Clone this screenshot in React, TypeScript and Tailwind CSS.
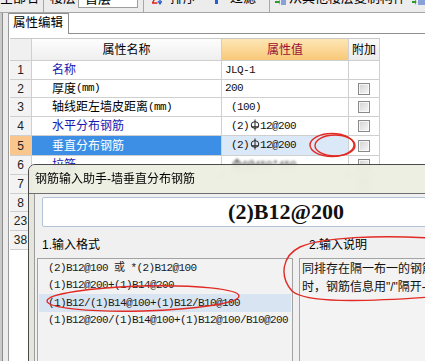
import React from "react";

const SANS = "font-['Liberation_Sans','Noto_Sans_CJK_SC',sans-serif]";
const MONO = "font-['Liberation_Mono','Noto_Sans_CJK_SC',monospace] text-[11px] tracking-[-0.6px]";

const Rebar = () => (
  <svg width="10" height="12" viewBox="0 0 10 12" className="inline-block align-[-2px] mx-[0.5px]" fill="none" stroke="#222" strokeWidth="1">
    <line x1="5" y1="0.5" x2="5" y2="11.5" />
    <ellipse cx="5" cy="6" rx="3.8" ry="3.3" />
    <line x1="1.2" y1="7.8" x2="8.8" y2="7.8" />
  </svg>
);

const Check = () => (
  <div className="w-[12px] h-[12px] border border-[#8a8a8a] bg-linear-to-br from-[#d2d2d2] to-[#f9f9f9] shadow-[inset_0_0_0_1px_rgba(255,255,255,0.7)]" />
);

const Unit = () => <span className={MONO}>(mm)</span>;

type Row = {
  n: string;
  h: string;
  name?: React.ReactNode;
  val?: React.ReactNode;
  check?: boolean;
  sel?: boolean;
  blur?: boolean;
};

const blue = "text-[#1717b2]";

const rows: Row[] = [
  { n: "1", h: "h-[19px]", name: <span className={blue}>名称</span>, val: "JLQ-1" },
  { n: "2", h: "h-[18px]", name: <>厚度<Unit /></>, val: "200", check: true },
  { n: "3", h: "h-[19px]", name: <>轴线距左墙皮距离<Unit /></>, val: " (100)", check: true },
  { n: "4", h: "h-[19px]", name: <span className={blue}>水平分布钢筋</span>, val: <> (2)<Rebar />12@200</>, check: true },
  { n: "5", h: "h-[20px]", sel: true, name: "垂直分布钢筋", val: <> (2)<Rebar />12@200</>, check: true },
  { n: "6", h: "h-[19px]", name: <span className={blue}>拉筋</span>, val: <> <Rebar />6@450*450</>, check: true, blur: true },
  { n: "7", h: "h-[19px]", check: true },
  { n: "8", h: "h-[18px]" },
  { n: "23", h: "h-[19px]" },
  { n: "38", h: "h-[19px]" },
];

function Toolbar() {
  return (
    <div className="h-[13px] bg-[#ececec] border-b border-[#a6a6a6] overflow-hidden">
      <div className="flex items-start h-[22px] -mt-[10px] text-[13px] leading-[16px] whitespace-nowrap">
        <div className="w-[43px]">全部名</div>
        <div className="w-px self-stretch bg-[#a8a8a8]" />
        <div className="w-[6px]" />
        <div className="w-[28px]">楼层</div>
        <div className="w-[60px] h-[18px] border border-[#9e9e9e] bg-white pl-[6px] leading-[16px]">首层</div>
        <div className="w-[5px]" />
        <div className="w-px self-stretch bg-[#a8a8a8]" />
        <div className="w-[8px]" />
        <svg width="10" height="22" viewBox="0 0 10 22" className="shrink-0">
          <path d="M0 4 H5 L0.5 13 H5.5" fill="none" stroke="#d22" strokeWidth="1.4" />
          <line x1="8" y1="2" x2="8" y2="13" stroke="#2456c8" strokeWidth="1.4" />
          <path d="M6 11 L8 14 L10 11" fill="none" stroke="#2456c8" strokeWidth="1.2" />
        </svg>
        <div className="w-[8px]" />
        <div className="w-[45px]">排序</div>
        <svg width="6" height="22" viewBox="0 0 6 22" className="shrink-0">
          <rect x="0" y="4" width="3" height="10" fill="#2a5bd7" />
        </svg>
        <div className="w-[9px]" />
        <div className="w-[39px]">过滤</div>
        <div className="w-px self-stretch bg-[#a8a8a8]" />
        <div className="w-[5px]" />
        <svg width="11" height="22" viewBox="0 0 11 22" className="shrink-0">
          <path d="M0 11 L4 11 L4 9 L5 12 L4 15 L4 13 L0 13 Z" fill="#2e9a2e" />
          <line x1="6" y1="10" x2="11" y2="10" stroke="#2456c8" />
          <line x1="6" y1="12" x2="11" y2="12" stroke="#2456c8" />
          <line x1="6" y1="14" x2="11" y2="14" stroke="#2456c8" />
        </svg>
        <div className="w-[3px]" />
        <div className="w-[123px]">从其他楼层复制构件</div>
        <svg width="13" height="22" viewBox="0 0 13 22" className="shrink-0">
          <path d="M0 11 L3 11 L3 9 L4.5 12 L3 15 L3 13 L0 13 Z" fill="#2e9a2e" />
          <line x1="6" y1="10" x2="13" y2="10" stroke="#2456c8" />
          <line x1="6" y1="12" x2="13" y2="12" stroke="#2456c8" />
          <line x1="6" y1="14" x2="13" y2="14" stroke="#2456c8" />
        </svg>
      </div>
    </div>
  );
}

function LeftStrip() {
  return (
    <div className="w-[9px] h-full flex shrink-0">
      <div className="w-[2px] bg-[#c9c9c9]" />
      <div className="w-px bg-[#8c8c8c]" />
      <div className="w-[5px] bg-[#ececec]" />
      <div className="w-px bg-[#9a9a9a]" />
    </div>
  );
}

function Table() {
  const cell = "border-r border-b border-[#cfcfcf]";
  return (
    <div className="ml-[1px] mt-[4px] w-[370px] border-t border-[#c9c9c9] text-[12px]">
      <div className="flex h-[22px]">
        <div className={`w-[22px] ${cell} bg-[#f0f0f0]`} />
        <div className={`w-[190px] ${cell} bg-linear-to-b from-[#fdfdfd] to-[#efefef] flex items-center justify-center`}>属性名称</div>
        <div className={`w-[127px] ${cell} bg-linear-to-b from-[#fde6b4] to-[#f8c878] flex items-center justify-center text-[#9a0f33]`}>属性值</div>
        <div className={`w-[31px] ${cell} bg-linear-to-b from-[#fafafa] to-[#ececec] flex items-center justify-center`}>附加</div>
      </div>
      {rows.map((r) => (
        <div key={r.n} className={`flex ${r.h}`}>
          <div className={`w-[22px] ${cell} flex items-center justify-center text-[12px] text-[#222] ${r.sel ? "bg-[#f9c78d]" : "bg-[#f3f3f3]"}`}>
            {r.n}
          </div>
          <div className={`w-[190px] ${cell} flex items-center pl-[20px] whitespace-nowrap ${r.sel ? "bg-[#3d8ee5] text-white" : ""}`}>
            {r.name}
          </div>
          <div className={`w-[127px] ${cell} flex items-center pl-[3px] whitespace-pre ${MONO} text-[#111] ${r.sel ? "bg-[#dbe8f8]" : ""}`}>
            <span className={r.blur ? "blur-[0.8px] text-[#555]" : ""}>{r.val}</span>
          </div>
          <div className={`w-[31px] ${cell} flex items-center justify-center`}>{r.check ? <Check /> : null}</div>
        </div>
      ))}
    </div>
  );
}

const listItems: { t: React.ReactNode; sel?: boolean }[] = [
  { t: "(2)B12@100 或 *(2)B12@100" },
  { t: "(1)B12@200+(1)B14@200" },
  { t: "(1)B12/(1)B14@100+(1)B12/B10@100", sel: true },
  { t: "(1)B12@200/(1)B14@100+(1)B12@100/B10@200" },
];

function Dialog() {
  return (
    <div className="absolute left-[28px] top-[164px] w-[520px] h-[220px] border border-[#4b4b4b] rounded-tl-[7px] overflow-hidden flex flex-col">
      <div className="h-[29px] shrink-0 bg-[#eaedde]/90 backdrop-blur-[3px] border-b border-[#707070] pl-[6px] text-[12px] leading-[28px] text-black">
        钢筋输入助手-墙垂直分布钢筋
      </div>
      <div className="flex-1 flex">
        <div className="w-[5px] bg-[#e4e6de]" />
        <div className="w-px bg-[#9c9c9c]" />
        <div className="flex-1 bg-[#f0f0f0] flex flex-col">
          <div className="ml-[7px] mt-[3px] w-[488px] h-[30px] shrink-0 rounded-[2px] border border-[#b3c2d6] bg-white flex items-center justify-center font-['Liberation_Serif',serif] font-bold text-[22px] leading-[28px] text-[#111]">
            (2)B12@200
          </div>
          <div className="flex mt-[10px]">
            <div className="ml-[2px] w-[256px] flex flex-col shrink-0">
              <div className="pl-[5px] h-[16px] leading-[16px] text-[12px]">1.输入格式</div>
              <div className="mt-[5px] h-[120px] border border-[#a3a3a3] bg-[#f2f2f2] px-px">
                {listItems.map((it, i) => (
                  <div
                    key={i}
                    className={`h-[17.5px] flex items-center pl-[9px] whitespace-pre ${MONO} text-[#1a1a1a] ${it.sel ? "bg-[#d9e4f2]" : ""}`}
                  >
                    {it.t}
                  </div>
                ))}
              </div>
            </div>
            <div className="ml-[6px] flex-1 flex flex-col">
              <div className="pl-[10px] h-[16px] leading-[16px] text-[12px]">2.输入说明</div>
              <div className="mt-[5px] h-[120px] border border-[#a3a3a3] bg-[#f3f3f3] pl-[2px] pt-px text-[12px] leading-[18px] whitespace-nowrap text-[#111]">
                同排存在隔一布一的钢筋
                <br />
                时，钢筋信息用"/"隔开-
              </div>
            </div>
          </div>
        </div>
      </div>
    </div>
  );
}

function Annotations() {
  return (
    <svg className="absolute inset-0 pointer-events-none" width="425" height="361" viewBox="0 0 425 361" fill="none" stroke="#e22a24" strokeWidth="1.4">
      <ellipse cx="332" cy="145" rx="22" ry="11.5" />
      <ellipse cx="335" cy="145.5" rx="20" ry="10.5" />
      <ellipse cx="143" cy="298.5" rx="96" ry="12.5" transform="rotate(-1.5 143 298.5)" />
      <path d="M430 238 C380 235, 322 237, 300 247 C282 256, 279 276, 292 291 C306 303, 360 302, 430 297" />
    </svg>
  );
}

export default function App() {
  return (
    <div className={`relative w-[425px] h-[361px] overflow-hidden bg-white text-black ${SANS}`}>
      <Toolbar />
      <div className="flex h-[348px]">
        <LeftStrip />
        <div className="flex-1 flex flex-col">
          <div className="flex h-[21px] shrink-0">
            <div className="w-[60px] h-full border-t border-r border-[#8f8f8f] bg-white pl-[4px] text-[12.5px] leading-[19px]">
              属性编辑
            </div>
            <div className="flex-1 border-b border-[#8f8f8f]" />
          </div>
          <Table />
        </div>
      </div>
      <Dialog />
      <Annotations />
    </div>
  );
}
